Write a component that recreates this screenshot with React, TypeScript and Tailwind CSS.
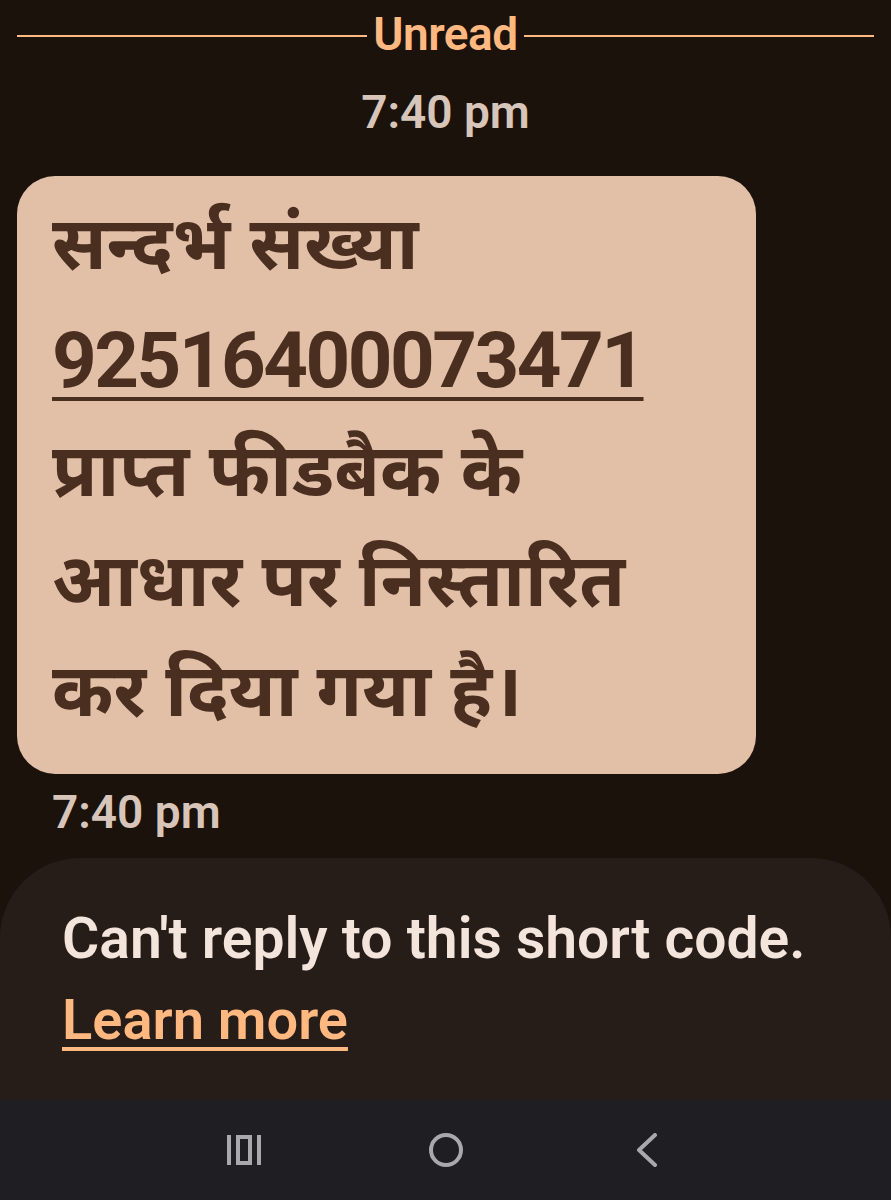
import React from "react";

const latin = { fontFamily: "Roboto, 'Noto Sans', 'Liberation Sans', sans-serif" };
const deva = { fontFamily: "'Noto Sans Devanagari', 'Noto Sans', Lohit Devanagari, Roboto, sans-serif" };

export default function App() {
  return (
    <div className="w-[891px] h-[1200px] bg-[#1c120c] flex flex-col overflow-hidden" style={latin}>
      <div className="flex items-center px-[17px] pt-[6px] gap-[6px]">
        <div className="flex-1 h-[2px] bg-[#ffb880] mt-[4px]" />
        <div className="text-[46px] leading-[56px] font-semibold text-[#ffb880] tracking-[-0.5px]">Unread</div>
        <div className="flex-1 h-[2px] bg-[#ffb880] mt-[4px]" />
      </div>
      <div className="text-center text-[46px] leading-[56px] font-semibold text-[#d8c5b9] mt-[22px]">7:40 pm</div>
      <div className="mt-[36px] ml-[17px] w-[739px] h-[598px] shrink-0 rounded-[38px] bg-[#e2bfa7] px-[35px] pt-[20px]">
        <div className="text-[74px] leading-[110px] font-bold text-[#4a2e1f]" style={deva}>
          <div>सन्दर्भ संख्या</div>
          <div className="text-[78px]">
            <span className="underline decoration-[4px] underline-offset-[10px] tracking-[-2.5px]" style={latin}>92516400073471</span>
          </div>
          <div>प्राप्त फीडबैक के</div>
          <div>आधार पर निस्तारित</div>
          <div>कर दिया गया है।</div>
        </div>
      </div>
      <div className="ml-[52px] mt-[10px] text-[46px] leading-[56px] font-semibold text-[#d8c5b9]">7:40 pm</div>
      <div className="mt-[18px] flex-1 bg-[#261d19] rounded-t-[80px] px-[62px] pt-[46px]">
        <div className="text-[57px] leading-[70px] font-semibold text-[#f3e4dc]">Can't reply to this short code.</div>
        <div className="mt-[16px] text-[56px] leading-[60px] font-semibold text-[#ffb880]">
          <span className="underline decoration-[4px] underline-offset-[8px]">Learn more</span>
        </div>
      </div>
      <div className="h-[100px] shrink-0 bg-[#1f1e23] flex items-center justify-center">
        <div className="flex items-center">
          <div className="w-[201px] flex justify-center">
            <svg width="36" height="32" viewBox="0 0 36 32" fill="none" stroke="#a9a9ad" strokeWidth="4">
              <line x1="2" y1="1" x2="2" y2="31" />
              <rect x="11" y="3" width="12" height="26" />
              <line x1="32" y1="1" x2="32" y2="31" />
            </svg>
          </div>
          <div className="w-[201px] flex justify-center">
            <svg width="36" height="36" viewBox="0 0 36 36" fill="none" stroke="#a9a9ad" strokeWidth="4">
              <circle cx="18" cy="18" r="15" />
            </svg>
          </div>
          <div className="w-[201px] flex justify-center">
            <svg width="24" height="34" viewBox="0 0 24 34" fill="none" stroke="#a9a9ad" strokeWidth="4" strokeLinecap="round" strokeLinejoin="round">
              <polyline points="20,2 4,17 20,32" />
            </svg>
          </div>
        </div>
      </div>
    </div>
  );
}
